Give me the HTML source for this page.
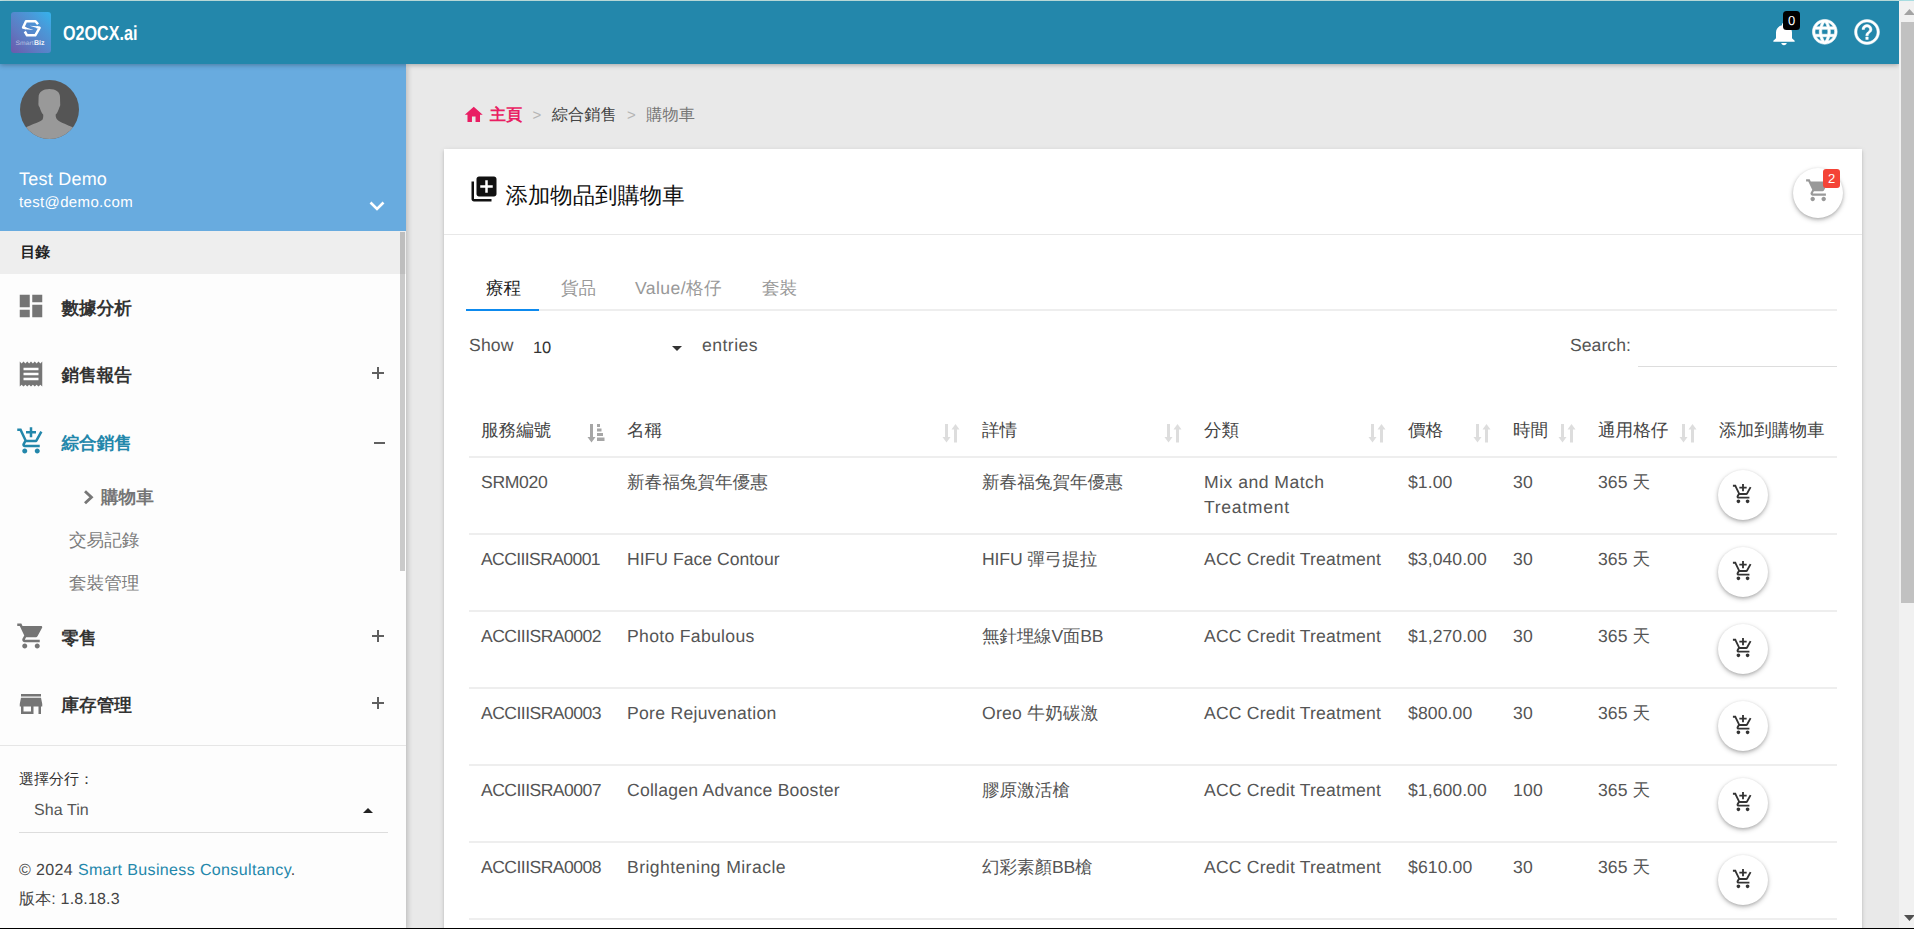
<!DOCTYPE html>
<html lang="zh-Hant">
<head>
<meta charset="utf-8">
<title>O2OCX.ai</title>
<style>
*{box-sizing:border-box;margin:0;padding:0}
html,body{width:1914px;height:929px;overflow:hidden}
body{font-family:"Liberation Sans",sans-serif;text-rendering:geometricPrecision;background:#e9e9e9;color:#555;position:relative}
.abs{position:absolute}
/* top bar */
#topline{left:0;top:0;width:1914px;height:1px;background:linear-gradient(90deg,#c9eceb 0,#c9eceb 1899px,#a8dde1 1899px)}
#header{left:0;top:1px;width:1899px;height:63px;background:#2387ab;box-shadow:0 1px 5px rgba(0,0,0,.3);z-index:20}
#logo{left:11px;top:11px;width:40px;height:41px;border-radius:3px;overflow:hidden;background:linear-gradient(45deg,#6c59ab 0%,#5d7bc3 35%,#4b97d7 70%,#35b3ec 100%)}
#brand{left:62.500px;top:20px;font-size:20.500px;font-weight:bold;color:#fff;line-height:26px;transform-origin:0 50%;transform:scaleX(.787);white-space:nowrap}
#nbadge{left:1783px;top:10px;width:17px;height:19px;border-radius:3.500px;background:#000;color:#fff;font-size:13px;line-height:19px;text-align:center}
/* page scrollbar */
#sbtrack{left:1899px;top:1px;width:15px;height:927px;background:#f1f1f1;z-index:30}
#sbthumb{left:1901px;top:22px;width:13px;height:581px;background:#c1c1c1;z-index:31}
#botline{left:0;top:928px;width:1914px;height:1px;background:#000;z-index:40}
/* sidebar */
#sidebar{left:0;top:64px;width:406px;height:864px;background:#fdfdfd;box-shadow:2px 2px 5px rgba(0,0,0,.18);z-index:10}
#user{left:0;top:0;width:406px;height:167px;background:#68abdf}
#avatar{left:20px;top:16px}
#uname{left:19px;top:103.700px;font-size:18px;color:#fff;line-height:22px}
#umail{left:19px;top:129px;font-size:15px;color:#fff;line-height:20px}
#menuhead{left:0;top:167px;width:406px;height:43px;background:#eee}
#menuhead span{position:absolute;left:20.500px;top:11px;font-size:14.800px;font-weight:bold;color:#222;line-height:22px}
.mi{position:absolute;left:61.500px;font-size:17.600px;font-weight:bold;color:#333;line-height:24px}
.sub{position:absolute;left:69px;font-size:17.600px;color:#7b7b7b;line-height:24px}
.pm{position:absolute;left:370px;font-size:20px;color:#555;line-height:24px;width:16px;text-align:center;font-weight:normal}
#sidescroll{left:400px;top:168px;width:5px;height:339px;background:rgba(0,0,0,.2)}
#sidefoot{left:0;top:681px;width:406px;height:183px;border-top:1px solid #e6e6e6}
.plus{position:absolute;left:372px;width:12px;height:12px}
.plus:before{content:"";position:absolute;left:0;top:5.200px;width:12px;height:1.500px;background:#606060}
.plus:after{content:"";position:absolute;left:5.250px;top:0;width:1.500px;height:12px;background:#606060}
.minus{position:absolute;left:374px;width:10.500px;height:1.600px;background:#606060}
/* main */
#crumb{left:465px;top:103.700px;font-size:16.200px;line-height:22px;color:#888;white-space:nowrap}
#card{left:444px;top:149px;width:1418px;height:790px;background:#fff;box-shadow:0 2.200px 2.200px 0 rgba(0,0,0,.14),0 3.300px 1.100px -2.200px rgba(0,0,0,.2),0 1.100px 5.500px 0 rgba(0,0,0,.12)}
#cardhead{left:0;top:0;width:1418px;height:86px;border-bottom:1px solid #e8e8e8}
#title{left:61.500px;top:30.800px;font-size:22.400px;color:#111;line-height:32px;white-space:nowrap}
.fab{position:absolute;width:50px;height:50px;border-radius:50%;background:#fff;box-shadow:0 2px 5px rgba(0,0,0,.26),0 1px 3px rgba(0,0,0,.12)}
.tab{position:absolute;top:127px;font-size:17.600px;line-height:24px;color:#999;white-space:nowrap}
.sep{color:#b5b5b5;margin:0 10.500px 0 10.500px;font-size:15px}
.cbadge{position:absolute;left:30px;top:1px;width:17px;height:19px;border-radius:3px;background:#f44336;color:#fff;font-size:13px;line-height:19px;text-align:center}
.ctl{font-size:17.600px;line-height:24px;color:#555;white-space:nowrap}
#tbl{left:25px;top:257px;width:1368px;border-collapse:collapse;table-layout:fixed;font-size:17.600px;color:#555}
#tbl th{position:relative;height:51px;padding:0 12px 3px 12px;text-align:left;font-weight:normal;color:#444;border-bottom:2px solid #eee;vertical-align:middle;white-space:nowrap;line-height:24px}
#tbl td{height:77px;padding:12px 12px 0 12px;vertical-align:top;border-bottom:2px solid #eee;line-height:25px;white-space:nowrap}
#tbl td:last-child{padding:12px 0 0 11px}
.sort{position:absolute;right:10px;top:18px}
.addbtn{position:relative;display:block}
.addbtn svg{position:absolute;left:13.700px;top:13.400px}
</style>
</head>
<body>
<div id="topline" class="abs"></div>
<div id="header" class="abs">
  <div id="logo" class="abs"><svg width="40" height="41" viewBox="0 0 40 41" style="position:absolute;left:0;top:0"><g fill="none" stroke="#fff" stroke-width="2.500" stroke-linejoin="round" stroke-linecap="butt"><path d="M27 12.300L24.500 9.200H15L12.100 15.600l3 .700"/><path d="M13.800 19.500l2.200 3.800h8.300l4.300-7.500-3-.700"/></g><path fill="#fff" d="M12.100 14.500L22.500 17.900 14.500 17.300zM28.600 16.700L18.500 13.800 26 14.300z"/><text x="4.600" y="32.600" font-family="Liberation Sans, sans-serif" font-size="6.300" fill="#fff" fill-opacity=".55" textLength="18" lengthAdjust="spacingAndGlyphs">Smart</text><text x="23" y="32.600" font-family="Liberation Sans, sans-serif" font-size="7" font-weight="bold" fill="#fff" fill-opacity=".92">Biz</text></svg></div>
  <div id="brand" class="abs">O2OCX.ai</div>
  <svg class="abs" style="left:1767.900px;top:18.800px" width="32" height="27.500" viewBox="0 0 24 24" preserveAspectRatio="none"><path fill="#fff" d="M12 22c1.1 0 2-.9 2-2h-4c0 1.1.89 2 2 2zm6-6v-5c0-3.07-1.64-5.64-4.5-6.32V4c0-.83-.67-1.5-1.5-1.5s-1.5.67-1.5 1.5v.68C7.63 5.36 6 7.92 6 11v5l-2 2v1h16v-1l-2-2z"/></svg>
  <div id="nbadge" class="abs">0</div>
  <svg class="abs" style="left:1810.300px;top:16px" width="29.600" height="29.600" viewBox="0 0 24 24"><path fill="#fff" stroke="#fff" stroke-width=".500" d="M11.99 2C6.47 2 2 6.48 2 12s4.47 10 9.99 10C17.52 22 22 17.52 22 12S17.52 2 11.99 2zm6.93 6h-2.95c-.32-1.25-.78-2.45-1.38-3.56 1.84.63 3.37 1.91 4.33 3.56zM12 4.04c.83 1.2 1.48 2.53 1.91 3.96h-3.82c.43-1.43 1.08-2.76 1.91-3.96zM4.26 14C4.1 13.36 4 12.69 4 12s.1-1.36.26-2h3.38c-.08.66-.14 1.32-.14 2 0 .68.06 1.34.14 2H4.26zm.82 2h2.95c.32 1.25.78 2.45 1.38 3.56-1.84-.63-3.37-1.9-4.33-3.56zm2.95-8H5.08c.96-1.66 2.49-2.93 4.33-3.56C8.81 5.55 8.35 6.75 8.03 8zM12 19.96c-.83-1.2-1.48-2.53-1.91-3.96h3.82c-.43 1.43-1.08 2.76-1.91 3.96zM14.34 14H9.66c-.09-.66-.16-1.32-.16-2 0-.68.07-1.35.16-2h4.68c.09.65.16 1.32.16 2 0 .68-.07 1.34-.16 2zm.25 5.56c.6-1.11 1.06-2.31 1.38-3.56h2.95c-.96 1.65-2.49 2.93-4.33 3.56zM16.36 14c.08-.66.14-1.32.14-2 0-.68-.06-1.34-.14-2h3.38c.16.64.26 1.31.26 2s-.1 1.36-.26 2h-3.38z"/></svg>
  <svg class="abs" style="left:1851.600px;top:15.800px" width="30" height="30" viewBox="0 0 24 24"><path fill="#fff" stroke="#fff" stroke-width=".350" d="M11 18h2v-2h-2v2zm1-16C6.48 2 2 6.48 2 12s4.48 10 10 10 10-4.48 10-10S17.520 2 12 2zm0 18c-4.41 0-8-3.59-8-8s3.59-8 8-8 8 3.59 8 8-3.59 8-8 8zm0-14c-2.21 0-4 1.79-4 4h2c0-1.1.9-2 2-2s2 .9 2 2c0 2-3 1.750-3 5h2c0-2.25 3-2.5 3-5 0-2.21-1.79-4-4-4z"/></svg>
</div>
<div id="sbtrack" class="abs"></div>
<div id="sbthumb" class="abs"></div>
<svg class="abs" style="left:1904px;top:9.300px;z-index:32" width="11" height="6" viewBox="0 0 11 6"><path d="M0 6L5.500 0L11 6z" fill="#a3a3a3"/></svg>
<svg class="abs" style="left:1904px;top:914.700px;z-index:32" width="11" height="6" viewBox="0 0 11 6"><path d="M0 0L5.500 6L11 0z" fill="#505050"/></svg>
<div id="botline" class="abs"></div>

<div id="sidebar" class="abs">
  <div id="user" class="abs">
    <svg id="avatar" class="abs" width="59" height="59" viewBox="0 0 59 59"><defs><clipPath id="avc"><circle cx="29.500" cy="29.500" r="29.500"/></clipPath></defs><circle cx="29.500" cy="29.500" r="29.500" fill="#555"/><path clip-path="url(#avc)" fill="#999" d="M29.300 9C23 9 18.600 12 18.600 17L18.400 24C18.400 25.500 19 26.500 19.500 27C20.500 30 21.500 33 23.200 34.600C23.400 37 23 39 22.400 39.800C18 43 10 45 6 47.500L0 60L59 60L53 47.500C48 45 41 43 37.400 39.800C36.500 39 35.500 37 35.700 34.600C37.500 33 38.500 30 39.500 27C40.200 26.500 40.300 25.500 40.200 24L40 17C40 12 36 9 29.300 9Z"/></svg>
    <svg class="abs" style="left:368px;top:136px" width="18" height="13" viewBox="0 0 18 13"><path d="M2.500 2.500L9 9L15.500 2.500" fill="none" stroke="#fff" stroke-width="2.600"/></svg>
    <div id="uname" class="abs"><span style="letter-spacing:0.23px">Test Demo</span></div>
    <div id="umail" class="abs"><span style="letter-spacing:0.35px">test@demo.com</span></div>
  </div>
  <div id="menuhead" class="abs"><span>目錄</span></div>
  <svg class="abs" style="left:16px;top:227px" width="30" height="30" viewBox="0 0 24 24"><path fill="#757575" d="M3 13h8V3H3v10zm0 8h8v-6H3v6zm10 0h8V11h-8v10zm0-18v6h8V3h-8z"/></svg>
  <div class="mi" style="top:231.500px">數據分析</div>
  <svg class="abs" style="left:16px;top:295px" width="30" height="30" viewBox="0 0 24 24"><path fill="#757575" d="M18 17H6v-2h12v2zm0-4H6v-2h12v2zm0-4H6V7h12v2zM3 22l1.500-1.500L6 22l1.500-1.500L9 22l1.500-1.500L12 22l1.500-1.500L15 22l1.500-1.500L18 22l1.500-1.500L21 22V2l-1.500 1.500L18 2l-1.500 1.500L15 2l-1.500 1.500L12 2l-1.500 1.500L9 2 7.500 3.500 6 2 4.500 3.500 3 2v20z"/></svg>
  <div class="mi" style="top:299px">銷售報告</div>
  <div class="plus" style="top:303px"></div>
  <svg class="abs" style="left:16px;top:362px" width="30" height="30" viewBox="0 0 24 24"><path fill="#2387ab" d="M11 9h2V6h3V4h-3V1h-2v3H8v2h3v3zm-4 9c-1.100 0-1.990.900-1.990 2S5.900 22 7 22s2-.900 2-2-.900-2-2-2zm10 0c-1.100 0-1.990.900-1.990 2s.890 2 1.990 2 2-.900 2-2-.900-2-2-2zm-9.830-3.250l.030-.120.900-1.630h7.450c.750 0 1.410-.410 1.750-1.030l3.860-7.010L19.420 4h-.010l-1.100 2-2.760 5H8.530l-.130-.270L6.160 6l-.950-2-.940-2H1v2h2l3.600 7.590-1.350 2.450c-.160.280-.250.610-.250.960 0 1.100.900 2 2 2h12v-2H7.420c-.130 0-.250-.110-.250-.250z"/></svg>
  <div class="mi" style="top:366.600px;color:#2387ab">綜合銷售</div>
  <div class="minus" style="top:378px"></div>
  <svg class="abs" style="left:80px;top:424px" width="16" height="18" viewBox="0 0 16 18"><path fill="none" stroke="#777" stroke-width="2.900" d="M5 3.300L11.400 9.300L5 15.300"/></svg>
  <div class="sub" style="top:421px;left:101px;font-weight:bold;color:#757575">購物車</div>
  <div class="sub" style="top:463.500px">交易記錄</div>
  <div class="sub" style="top:506.500px">套裝管理</div>
  <svg class="abs" style="left:16px;top:557px" width="30" height="30" viewBox="0 0 24 24"><path fill="#757575" d="M7 18c-1.100 0-1.990.900-1.990 2S5.900 22 7 22s2-.900 2-2-.900-2-2-2zM1 2v2h2l3.600 7.590-1.350 2.450c-.160.280-.250.610-.250.960 0 1.100.900 2 2 2h12v-2H7.420c-.140 0-.250-.110-.250-.250l.030-.120.900-1.630h7.450c.750 0 1.410-.410 1.750-1.030l3.580-6.490c.080-.140.120-.310.120-.480 0-.550-.450-1-1-1H5.210l-.940-2H1zm16 16c-1.100 0-1.990.900-1.990 2s.890 2 1.990 2 2-.900 2-2-.900-2-2-2z"/></svg>
  <div class="mi" style="top:561.500px">零售</div>
  <div class="plus" style="top:566px"></div>
  <svg class="abs" style="left:16px;top:625px" width="30" height="30" viewBox="0 0 24 24"><path fill="#757575" d="M20 4H4v2h16V4zm1 10v-2l-1-5H4l-1 5v2h1v6h10v-6h4v6h2v-6h1zm-9 4H6v-4h6v4z"/></svg>
  <div class="mi" style="top:629px">庫存管理</div>
  <div class="plus" style="top:633px"></div>
  <div id="sidescroll" class="abs"></div>
  <div id="sidefoot" class="abs">
    <div class="abs" style="left:19px;top:23.500px;font-size:15px;color:#333;line-height:20px">選擇分行：</div>
    <div class="abs" style="left:34px;top:54px;font-size:16px;color:#555;line-height:22px"><span style="letter-spacing:0.08px">Sha Tin</span></div>
    <svg class="abs" style="left:363px;top:62px" width="10" height="5" viewBox="0 0 10 5"><path d="M0 5L5 0L10 5z" fill="#222"/></svg>
    <div class="abs" style="left:19px;top:86px;width:369px;height:1px;background:#ddd"></div>
    <div class="abs" style="left:19px;top:113px;font-size:16px;color:#444;line-height:24px;white-space:nowrap"><span style="letter-spacing:0.37px">© 2024 <span style="color:#2387ab">Smart Business Consultancy</span>.</span></div>
    <div class="abs" style="left:19px;top:141.500px;font-size:16px;color:#444;line-height:24px;white-space:nowrap"><span style="letter-spacing:0.17px">版本: 1.8.18.3</span></div>
  </div>
</div>

<div id="crumb" class="abs"><svg style="position:absolute;left:-2.200px;top:0px" width="21.500" height="21.500" viewBox="0 0 24 24"><path fill="#e91e63" d="M10 20v-6h4v6h5v-8h3L12 3 2 12h3v8z"/></svg><span style="color:#e91e63;font-weight:bold;margin-left:24.700px">主頁</span><span class="sep">&gt;</span><span style="color:#444">綜合銷售</span><span class="sep">&gt;</span><span style="color:#777">購物車</span></div>
<div id="card" class="abs">
  <div id="cardhead" class="abs">
    <svg class="abs" style="left:25px;top:25px" width="30" height="30" viewBox="0 0 24 24"><path fill="#111" d="M4 6H2v14c0 1.100.900 2 2 2h14v-2H4V6zm16-4H8c-1.100 0-2 .900-2 2v12c0 1.100.900 2 2 2h12c1.100 0 2-.900 2-2V4c0-1.100-.900-2-2-2zm-1 9h-4v4h-2v-4H9V9h4V5h2v4h4v2z"/></svg>
    <div id="title" class="abs">添加物品到購物車</div>
    <div class="fab" style="left:1349px;top:19px"><svg style="position:absolute;left:11.600px;top:9.300px" width="26.400" height="26.400" viewBox="0 0 24 24"><path fill="#999" d="M7 18c-1.100 0-1.990.900-1.990 2S5.900 22 7 22s2-.900 2-2-.900-2-2-2zM1 2v2h2l3.600 7.590-1.350 2.450c-.160.280-.250.610-.250.960 0 1.100.900 2 2 2h12v-2H7.420c-.140 0-.250-.110-.250-.250l.030-.120.900-1.630h7.450c.750 0 1.410-.410 1.750-1.030l3.580-6.490c.080-.140.120-.310.120-.480 0-.550-.450-1-1-1H5.210l-.940-2H1zm16 16c-1.100 0-1.990.900-1.990 2s.890 2 1.990 2 2-.900 2-2-.900-2-2-2z"/></svg><div class="cbadge">2</div></div>
  </div>
  <div class="tab" style="left:42px;color:#222">療程</div>
  <div class="tab" style="left:117px">貨品</div>
  <div class="tab" style="left:191px"><span style="letter-spacing:0.40px">Value/格仔</span></div>
  <div class="tab" style="left:318px">套裝</div>
  <div class="abs" style="left:22px;top:160px;width:1371px;height:2px;background:#eee"></div>
  <div class="abs" style="left:22px;top:160px;width:73px;height:2px;background:#0d8aee"></div>
  <div class="abs ctl" style="left:25px;top:184px"><span style="letter-spacing:0.17px">Show</span></div>
  <div class="abs ctl" style="left:89px;top:187.300px;font-size:16.500px;color:#333"><span style="letter-spacing:-0.18px">10</span></div>
  <svg class="abs" style="left:228px;top:197px" width="10" height="5" viewBox="0 0 10 5"><path d="M0 0L5 5L10 0z" fill="#333"/></svg>
  <div class="abs ctl" style="left:258px;top:184px"><span style="letter-spacing:0.46px">entries</span></div>
  <div class="abs ctl" style="left:1126px;top:184.400px"><span style="letter-spacing:0.05px">Search:</span></div>
  <div class="abs" style="left:1194px;top:217px;width:199px;height:1px;background:#ddd"></div>
  <table id="tbl" class="abs">
    <colgroup><col style="width:146px"><col style="width:355px"><col style="width:222px"><col style="width:204px"><col style="width:105px"><col style="width:85px"><col style="width:121px"><col style="width:130px"></colgroup>
    <thead><tr><th>服務編號<svg class="sort" width="18" height="19" viewBox="0 0 18 19"><path fill="#a6a6a6" d="M3 0h3v13h2.500L4.500 18.500 .500 13H3zM10 0h3v3h-3zM10 4.500h4.500v3H10zM10 9h6v3h-6zM10 13.500h7.500v3.500H10z"/></svg></th><th>名稱<svg class="sort" width="18" height="19" viewBox="0 0 18 19"><path fill="#ddd" d="M3 0h3v13h2.500L4.500 18.500 .500 13H3zM12 18.500h3V5.500h2.500L13.500 0 9.500 5.500H12z"/></svg></th><th>詳情<svg class="sort" width="18" height="19" viewBox="0 0 18 19"><path fill="#ddd" d="M3 0h3v13h2.500L4.500 18.500 .500 13H3zM12 18.500h3V5.500h2.500L13.500 0 9.500 5.500H12z"/></svg></th><th>分類<svg class="sort" width="18" height="19" viewBox="0 0 18 19"><path fill="#ddd" d="M3 0h3v13h2.500L4.500 18.500 .500 13H3zM12 18.500h3V5.500h2.500L13.500 0 9.500 5.500H12z"/></svg></th><th>價格<svg class="sort" width="18" height="19" viewBox="0 0 18 19"><path fill="#ddd" d="M3 0h3v13h2.500L4.500 18.500 .500 13H3zM12 18.500h3V5.500h2.500L13.500 0 9.500 5.500H12z"/></svg></th><th>時間<svg class="sort" width="18" height="19" viewBox="0 0 18 19"><path fill="#ddd" d="M3 0h3v13h2.500L4.500 18.500 .500 13H3zM12 18.500h3V5.500h2.500L13.500 0 9.500 5.500H12z"/></svg></th><th>通用格仔<svg class="sort" width="18" height="19" viewBox="0 0 18 19"><path fill="#ddd" d="M3 0h3v13h2.500L4.500 18.500 .500 13H3zM12 18.500h3V5.500h2.500L13.500 0 9.500 5.500H12z"/></svg></th><th>添加到購物車</th></tr></thead>
    <tbody>
<tr><td><span style="letter-spacing:-0.33px">SRM020</span></td><td>新春福兔賀年優惠</td><td>新春福兔賀年優惠</td><td><span style="letter-spacing:0.47px">Mix and Match</span><br><span style="letter-spacing:0.69px">Treatment</span></td><td><span style="letter-spacing:0.07px">$1.00</span></td><td><span style="letter-spacing:0.31px">30</span></td><td><span style="letter-spacing:0.05px">365 天</span></td><td><div class="fab addbtn"><svg width="22" height="22" viewBox="0 0 24 24"><path fill="#333" d="M11 9h2V6h3V4h-3V1h-2v3H8v2h3v3zm-4 9c-1.100 0-1.990.900-1.990 2S5.900 22 7 22s2-.900 2-2-.900-2-2-2zm10 0c-1.100 0-1.990.900-1.990 2s.890 2 1.990 2 2-.900 2-2-.900-2-2-2zm-9.830-3.250l.030-.120.900-1.630h7.450c.750 0 1.410-.410 1.750-1.030l3.860-7.010L19.420 4h-.010l-1.100 2-2.760 5H8.530l-.130-.270L6.160 6l-.950-2-.940-2H1v2h2l3.600 7.590-1.350 2.450c-.160.280-.250.610-.250.960 0 1.100.900 2 2 2h12v-2H7.420c-.130 0-.250-.110-.250-.250z"/></svg></div></td></tr>
<tr><td><span style="letter-spacing:-0.63px">ACCIIISRA0001</span></td><td><span>HIFU Face Contour</span></td><td><span style="letter-spacing:-0.12px">HIFU 彈弓提拉</span></td><td><span style="letter-spacing:0.20px">ACC Credit Treatment</span></td><td><span style="letter-spacing:0.06px">$3,040.00</span></td><td><span style="letter-spacing:0.31px">30</span></td><td><span style="letter-spacing:0.05px">365 天</span></td><td><div class="fab addbtn"><svg width="22" height="22" viewBox="0 0 24 24"><path fill="#333" d="M11 9h2V6h3V4h-3V1h-2v3H8v2h3v3zm-4 9c-1.100 0-1.990.900-1.990 2S5.900 22 7 22s2-.900 2-2-.900-2-2-2zm10 0c-1.100 0-1.990.900-1.990 2s.890 2 1.990 2 2-.900 2-2-.900-2-2-2zm-9.830-3.250l.030-.120.900-1.630h7.450c.750 0 1.410-.410 1.750-1.030l3.860-7.010L19.420 4h-.010l-1.100 2-2.760 5H8.530l-.130-.270L6.160 6l-.950-2-.940-2H1v2h2l3.600 7.590-1.350 2.450c-.160.280-.250.610-.250.960 0 1.100.900 2 2 2h12v-2H7.420c-.130 0-.250-.110-.250-.250z"/></svg></div></td></tr>
<tr><td><span style="letter-spacing:-0.55px">ACCIIISRA0002</span></td><td><span style="letter-spacing:0.31px">Photo Fabulous</span></td><td><span style="letter-spacing:-0.25px">無針埋線V面BB</span></td><td><span style="letter-spacing:0.20px">ACC Credit Treatment</span></td><td><span style="letter-spacing:0.06px">$1,270.00</span></td><td><span style="letter-spacing:0.31px">30</span></td><td><span style="letter-spacing:0.05px">365 天</span></td><td><div class="fab addbtn"><svg width="22" height="22" viewBox="0 0 24 24"><path fill="#333" d="M11 9h2V6h3V4h-3V1h-2v3H8v2h3v3zm-4 9c-1.100 0-1.990.900-1.990 2S5.900 22 7 22s2-.900 2-2-.900-2-2-2zm10 0c-1.100 0-1.990.900-1.990 2s.890 2 1.990 2 2-.900 2-2-.900-2-2-2zm-9.830-3.250l.030-.120.900-1.630h7.450c.750 0 1.410-.410 1.750-1.030l3.860-7.010L19.420 4h-.010l-1.100 2-2.760 5H8.530l-.130-.270L6.160 6l-.950-2-.940-2H1v2h2l3.600 7.590-1.350 2.450c-.160.280-.250.610-.250.960 0 1.100.900 2 2 2h12v-2H7.420c-.130 0-.250-.110-.250-.250z"/></svg></div></td></tr>
<tr><td><span style="letter-spacing:-0.55px">ACCIIISRA0003</span></td><td><span style="letter-spacing:0.28px">Pore Rejuvenation</span></td><td><span style="letter-spacing:0.26px">Oreo 牛奶碳激</span></td><td><span style="letter-spacing:0.20px">ACC Credit Treatment</span></td><td><span style="letter-spacing:0.11px">$800.00</span></td><td><span style="letter-spacing:0.31px">30</span></td><td><span style="letter-spacing:0.05px">365 天</span></td><td><div class="fab addbtn"><svg width="22" height="22" viewBox="0 0 24 24"><path fill="#333" d="M11 9h2V6h3V4h-3V1h-2v3H8v2h3v3zm-4 9c-1.100 0-1.990.900-1.990 2S5.900 22 7 22s2-.900 2-2-.900-2-2-2zm10 0c-1.100 0-1.990.900-1.990 2s.890 2 1.990 2 2-.900 2-2-.900-2-2-2zm-9.830-3.250l.030-.120.900-1.630h7.450c.750 0 1.410-.410 1.750-1.030l3.860-7.010L19.420 4h-.010l-1.100 2-2.760 5H8.530l-.130-.270L6.160 6l-.950-2-.940-2H1v2h2l3.600 7.590-1.350 2.450c-.160.280-.250.610-.250.960 0 1.100.900 2 2 2h12v-2H7.420c-.130 0-.250-.110-.250-.250z"/></svg></div></td></tr>
<tr><td><span style="letter-spacing:-0.55px">ACCIIISRA0007</span></td><td><span style="letter-spacing:0.23px">Collagen Advance Booster</span></td><td>膠原激活槍</td><td><span style="letter-spacing:0.20px">ACC Credit Treatment</span></td><td><span style="letter-spacing:0.06px">$1,600.00</span></td><td><span style="letter-spacing:0.18px">100</span></td><td><span style="letter-spacing:0.05px">365 天</span></td><td><div class="fab addbtn"><svg width="22" height="22" viewBox="0 0 24 24"><path fill="#333" d="M11 9h2V6h3V4h-3V1h-2v3H8v2h3v3zm-4 9c-1.100 0-1.990.900-1.990 2S5.900 22 7 22s2-.900 2-2-.900-2-2-2zm10 0c-1.100 0-1.990.900-1.990 2s.890 2 1.990 2 2-.900 2-2-.900-2-2-2zm-9.830-3.250l.030-.120.900-1.630h7.450c.750 0 1.410-.410 1.750-1.030l3.860-7.010L19.420 4h-.010l-1.100 2-2.760 5H8.530l-.130-.270L6.160 6l-.950-2-.940-2H1v2h2l3.600 7.590-1.350 2.450c-.160.280-.250.610-.250.960 0 1.100.900 2 2 2h12v-2H7.420c-.130 0-.250-.110-.250-.250z"/></svg></div></td></tr>
<tr><td><span style="letter-spacing:-0.55px">ACCIIISRA0008</span></td><td><span style="letter-spacing:0.44px">Brightening Miracle</span></td><td><span style="letter-spacing:-0.12px">幻彩素顏BB槍</span></td><td><span style="letter-spacing:0.20px">ACC Credit Treatment</span></td><td><span style="letter-spacing:0.11px">$610.00</span></td><td><span style="letter-spacing:0.31px">30</span></td><td><span style="letter-spacing:0.05px">365 天</span></td><td><div class="fab addbtn"><svg width="22" height="22" viewBox="0 0 24 24"><path fill="#333" d="M11 9h2V6h3V4h-3V1h-2v3H8v2h3v3zm-4 9c-1.100 0-1.990.900-1.990 2S5.900 22 7 22s2-.900 2-2-.900-2-2-2zm10 0c-1.100 0-1.990.900-1.990 2s.890 2 1.990 2 2-.900 2-2-.900-2-2-2zm-9.830-3.250l.030-.120.900-1.630h7.450c.750 0 1.410-.410 1.750-1.030l3.860-7.010L19.420 4h-.010l-1.100 2-2.760 5H8.530l-.130-.270L6.160 6l-.950-2-.940-2H1v2h2l3.600 7.590-1.350 2.450c-.160.280-.250.610-.250.960 0 1.100.900 2 2 2h12v-2H7.420c-.130 0-.250-.110-.250-.250z"/></svg></div></td></tr>
<tr><td><span style="letter-spacing:-0.55px">ACCIIISRA0009</span></td><td>Skin Renewal</td><td>煥膚</td><td><span style="letter-spacing:0.20px">ACC Credit Treatment</span></td><td><span style="letter-spacing:0.11px">$900.00</span></td><td><span style="letter-spacing:0.31px">30</span></td><td><span style="letter-spacing:0.05px">365 天</span></td><td><div class="fab addbtn"><svg width="22" height="22" viewBox="0 0 24 24"><path fill="#333" d="M11 9h2V6h3V4h-3V1h-2v3H8v2h3v3zm-4 9c-1.100 0-1.990.900-1.990 2S5.900 22 7 22s2-.900 2-2-.900-2-2-2zm10 0c-1.100 0-1.990.900-1.990 2s.890 2 1.990 2 2-.900 2-2-.900-2-2-2zm-9.830-3.250l.030-.120.900-1.630h7.450c.750 0 1.410-.410 1.750-1.030l3.860-7.010L19.420 4h-.010l-1.100 2-2.760 5H8.530l-.130-.270L6.160 6l-.950-2-.940-2H1v2h2l3.600 7.590-1.350 2.450c-.160.280-.250.610-.250.960 0 1.100.900 2 2 2h12v-2H7.420c-.130 0-.250-.110-.250-.250z"/></svg></div></td></tr>
    </tbody>
  </table>
</div>
</body>
</html>
